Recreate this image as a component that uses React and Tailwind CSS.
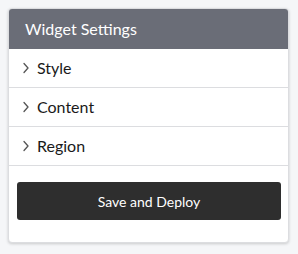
import React from "react";

function Chevron() {
  return (
    <svg width="8" height="12" viewBox="0 0 8 12" fill="none" className="shrink-0">
      <path d="M2 1.5 L6 6 L2 10.5" stroke="#555" strokeWidth="1.3" strokeLinecap="round" strokeLinejoin="round" />
    </svg>
  );
}

export default function App() {
  const sections = ["Style", "Content", "Region"];

  return (
    <div
      className="w-[298px] h-[254px] bg-[#f5f6f8] p-[8px]"
      style={{ fontFamily: "Lato, 'Open Sans', sans-serif" }}
    >
      <div className="w-[281px] bg-white rounded-[4px] border border-[#dcdde0] shadow-[0_1px_3px_rgba(0,0,0,0.18)] overflow-hidden">
        {/* Header */}
        <div className="h-[40px] bg-[#6a6d77] flex items-center px-[16px]">
          <span className="text-white text-[16px] leading-none">Widget Settings</span>
        </div>

        {/* Accordion rows */}
        {sections.map((name) => (
          <div
            key={name}
            className="h-[39px] flex items-center gap-[7px] pl-[13px] border-b border-[#dcdde0]"
          >
            <Chevron />
            <span className="text-[16px] text-[#1a1a1a]">{name}</span>
          </div>
        ))}

        {/* Footer */}
        <div className="pl-[8px] pr-[7px] pt-[16px] pb-[22px]">
          <button className="w-full h-[38px] bg-[#2e2e2e] rounded-[3px] text-white text-[14px]">
            Save and Deploy
          </button>
        </div>
      </div>
    </div>
  );
}
